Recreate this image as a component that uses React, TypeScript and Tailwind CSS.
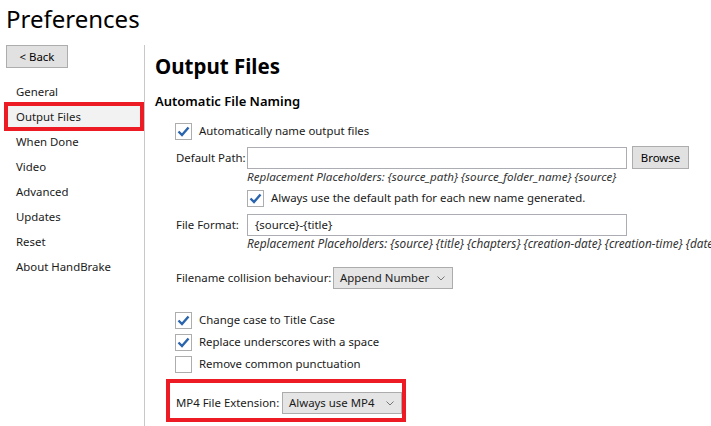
import React from "react";

const font = { fontFamily: '"Noto Sans", "Open Sans", sans-serif' };

function Check({ checked }: { checked: boolean }) {
  return (
    <span className="w-[17px] h-[17px] border border-[#adadad] bg-white flex items-center justify-center shrink-0">
      {checked && (
        <svg width="13" height="11" viewBox="0 0 13 11">
          <path d="M1.5 5.5 L5 9 L11.5 1.5" fill="none" stroke="#2a64ad" strokeWidth="2.4" />
        </svg>
      )}
    </span>
  );
}

function CheckRow({ checked, label, h }: { checked: boolean; label: string; h: string }) {
  return (
    <div className={`flex items-center gap-[7px] ${h}`}>
      <Check checked={checked} />
      <span className="text-[11.4px] text-[#1a1a1a] whitespace-nowrap">{label}</span>
    </div>
  );
}

function Select({ value, w }: { value: string; w: string }) {
  return (
    <div className={`h-[22px] ${w} shrink-0 bg-[#e5e5e5] border border-[#acacac] flex items-center justify-between pl-[6px] pr-[7px]`}>
      <span className="text-[11.4px] text-[#1a1a1a] whitespace-nowrap">{value}</span>
      <svg width="8" height="5" viewBox="0 0 8 5">
        <path d="M0.5 0.5 L4 4 L7.5 0.5" fill="none" stroke="#777" strokeWidth="1" />
      </svg>
    </div>
  );
}

const navItems = ["General", "Output Files", "When Done", "Video", "Advanced", "Updates", "Reset", "About HandBrake"];

export default function App() {
  return (
    <div className="w-[711px] h-[426px] bg-white overflow-hidden flex flex-col text-[#1a1a1a]" style={font}>
      {/* Title */}
      <div className="h-[45px] shrink-0 pl-[6px] pt-[2px] text-[24px] leading-[34px] text-black">Preferences</div>

      <div className="flex flex-1 min-h-0">
        {/* Sidebar */}
        <div className="w-[145px] shrink-0 border-r border-[#c8c8c8] pl-[6px] pr-[2px]">
          <button className="block w-[62px] h-[23px] bg-[#e1e1e1] border border-[#adadad] text-[11.4px] leading-none text-black">
            &lt; Back
          </button>
          <div className="mt-[11px] flex flex-col">
            {navItems.map((item) => (
              <div
                key={item}
                className={`h-[25px] pl-[10px] flex items-center text-[11.4px] whitespace-nowrap ${
                  item === "Output Files"
                    ? "bg-[#f2f2f2] outline-[4px] outline-solid outline-[#ed1c24] -outline-offset-2"
                    : ""
                }`}
              >
                {item}
              </div>
            ))}
          </div>
        </div>

        {/* Content */}
        <div className="flex-1 min-w-0 pl-[10px] pt-[6px] flex flex-col">
          <div className="h-[30px] text-[20.5px] leading-[30px] font-bold text-black whitespace-nowrap">Output Files</div>
          <div className="mt-[10px] h-[20px] text-[13px] leading-[20px] font-semibold text-black whitespace-nowrap">
            Automatic File Naming
          </div>

          <div className="ml-[20px] mt-[10px] flex flex-col">
            <CheckRow checked label="Automatically name output files" h="h-[20px]" />

            <div className="mt-[5px] flex items-center">
              <span className="w-[72px] shrink-0 pl-[1px] text-[11.4px] whitespace-nowrap">Default Path:</span>
              <div className="w-[380px] shrink-0 h-[22px] border border-[#abadb3] bg-white" />
              <button className="ml-[5px] w-[57px] shrink-0 h-[23px] bg-[#e1e1e1] border border-[#adadad] text-[11.4px] leading-none text-black">
                Browse
              </button>
            </div>
            <div className="ml-[72px] h-[16px] flex items-center text-[11.6px] italic text-[#333] whitespace-nowrap">
              Replacement Placeholders: {"{source_path} {source_folder_name} {source}"}
            </div>
            <div className="ml-[72px] mt-[4px] h-[18px] flex items-center gap-[7px]">
              <Check checked />
              <span className="text-[11.4px] whitespace-nowrap">Always use the default path for each new name generated.</span>
            </div>

            <div className="mt-[7px] flex items-center">
              <span className="w-[72px] shrink-0 pl-[1px] text-[11.4px] whitespace-nowrap">File Format:</span>
              <div className="w-[380px] shrink-0 h-[22px] border border-[#abadb3] bg-white pl-[7px] flex items-center text-[11.4px] whitespace-nowrap">
                {"{source}-{title}"}
              </div>
            </div>
            <div className="ml-[72px] h-[16px] flex items-center text-[11.8px] italic text-[#333] whitespace-nowrap">
              Replacement Placeholders: {"{source} {title} {chapters} {creation-date} {creation-time} {date} {time}"}
            </div>

            <div className="mt-[15px] flex items-center">
              <span className="w-[158px] shrink-0 pl-[1px] text-[11.4px] whitespace-nowrap">Filename collision behaviour:</span>
              <Select value="Append Number" w="w-[120px]" />
            </div>

            <div className="mt-[20px] flex flex-col">
              <CheckRow checked label="Change case to Title Case" h="h-[22px]" />
              <CheckRow checked label="Replace underscores with a space" h="h-[22px]" />
              <CheckRow checked={false} label="Remove common punctuation" h="h-[22px]" />
            </div>
          </div>

          <div className="ml-[11px] mt-[4px] w-[240px] h-[43px] shrink-0 border-4 border-[#ed1c24] pl-[6px] pt-[9px] flex items-start">
            <span className="w-[106px] shrink-0 h-[22px] flex items-center text-[11.4px] whitespace-nowrap">MP4 File Extension:</span>
            <Select value="Always use MP4" w="w-[120px]" />
          </div>
        </div>
      </div>
    </div>
  );
}
